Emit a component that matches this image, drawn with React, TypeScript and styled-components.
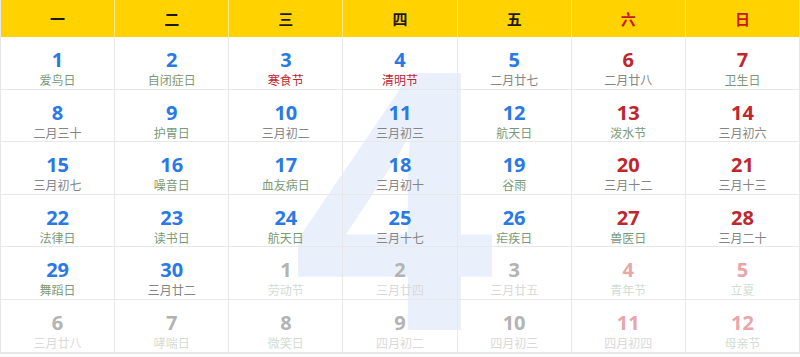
import React from "react";
import styled, { createGlobalStyle } from "styled-components";

type Tone = "work" | "rest";
type LabelKind = "lunar" | "fest" | "holiday";

interface Day {
  n: number;
  label: string;
  kind: LabelKind;
  other?: boolean;
}

const WEEK = ["一", "二", "三", "四", "五", "六", "日"];

const DAYS: Day[] = [
  { n: 1, label: "爱鸟日", kind: "fest" },
  { n: 2, label: "自闭症日", kind: "fest" },
  { n: 3, label: "寒食节", kind: "holiday" },
  { n: 4, label: "清明节", kind: "holiday" },
  { n: 5, label: "二月廿七", kind: "lunar" },
  { n: 6, label: "二月廿八", kind: "lunar" },
  { n: 7, label: "卫生日", kind: "fest" },
  { n: 8, label: "二月三十", kind: "lunar" },
  { n: 9, label: "护胃日", kind: "fest" },
  { n: 10, label: "三月初二", kind: "lunar" },
  { n: 11, label: "三月初三", kind: "lunar" },
  { n: 12, label: "航天日", kind: "fest" },
  { n: 13, label: "泼水节", kind: "fest" },
  { n: 14, label: "三月初六", kind: "lunar" },
  { n: 15, label: "三月初七", kind: "lunar" },
  { n: 16, label: "噪音日", kind: "fest" },
  { n: 17, label: "血友病日", kind: "fest" },
  { n: 18, label: "三月初十", kind: "lunar" },
  { n: 19, label: "谷雨", kind: "fest" },
  { n: 20, label: "三月十二", kind: "lunar" },
  { n: 21, label: "三月十三", kind: "lunar" },
  { n: 22, label: "法律日", kind: "fest" },
  { n: 23, label: "读书日", kind: "fest" },
  { n: 24, label: "航天日", kind: "fest" },
  { n: 25, label: "三月十七", kind: "lunar" },
  { n: 26, label: "疟疾日", kind: "fest" },
  { n: 27, label: "兽医日", kind: "fest" },
  { n: 28, label: "三月二十", kind: "lunar" },
  { n: 29, label: "舞蹈日", kind: "fest" },
  { n: 30, label: "三月廿二", kind: "lunar" },
  { n: 1, label: "劳动节", kind: "fest", other: true },
  { n: 2, label: "三月廿四", kind: "lunar", other: true },
  { n: 3, label: "三月廿五", kind: "lunar", other: true },
  { n: 4, label: "青年节", kind: "fest", other: true },
  { n: 5, label: "立夏", kind: "fest", other: true },
  { n: 6, label: "三月廿八", kind: "lunar", other: true },
  { n: 7, label: "哮喘日", kind: "fest", other: true },
  { n: 8, label: "微笑日", kind: "fest", other: true },
  { n: 9, label: "四月初二", kind: "lunar", other: true },
  { n: 10, label: "四月初三", kind: "lunar", other: true },
  { n: 11, label: "四月初四", kind: "lunar", other: true },
  { n: 12, label: "母亲节", kind: "fest", other: true },
];

const GlobalStyle = createGlobalStyle`
  html, body {
    margin: 0;
    padding: 0;
    background: #fff;
  }
  body {
    font-family: "Noto Sans CJK SC", "Noto Sans", sans-serif;
  }
`;

const Calendar = styled.div`
  position: relative;
  width: 800px;
  height: 357px;
  overflow: hidden;
`;

// big pale month number behind the grid
const Watermark = styled.span`
  position: absolute;
  left: 292px;
  top: 46px;
  font-family: "Open Sans", sans-serif;
  font-weight: 700;
  font-size: 360px;
  line-height: 0.8;
  color: #e9f0fc;
  user-select: none;
  z-index: 0;
`;

const Grid = styled.div`
  position: relative;
  z-index: 1;
  display: grid;
  grid-template-columns: repeat(7, 1fr);
  grid-template-rows: 37px repeat(6, 52.6px);
  width: 800px;
  box-sizing: border-box;
  border-left: 1px solid #e8e8e8;
  border-bottom: 1px solid #e8e8e8;
`;

const HeadCell = styled.div<{ $tone: Tone }>`
  display: flex;
  align-items: center;
  justify-content: center;
  background: #ffd200;
  border-right: 1px solid #fde88c;
  font-size: 15px;
  font-weight: 700;
  color: ${({ $tone }) => ($tone === "rest" ? "#c8161d" : "#1a1a1a")};
`;

const DayCell = styled.div`
  display: flex;
  flex-direction: column;
  align-items: center;
  padding-top: 11px;
  box-sizing: border-box;
  border-right: 1px solid #e8e8e8;
  border-bottom: 1px solid #e8e8e8;
`;

const numColor = (tone: Tone, other?: boolean) => {
  if (other) return tone === "rest" ? "#e9a6a8" : "#b3b3b3";
  return tone === "rest" ? "#c0262c" : "#2a79e6";
};

const DayNum = styled.div<{ $tone: Tone; $other?: boolean }>`
  font-family: "Open Sans", sans-serif;
  font-weight: 700;
  font-size: 20px;
  line-height: 23px;
  color: ${({ $tone, $other }) => numColor($tone, $other)};
`;

const labelColor: Record<LabelKind, [string, string]> = {
  lunar: ["#858585", "#d9d9d9"],
  fest: ["#789a78", "#d2ddd2"],
  holiday: ["#c0262c", "#ecbcbd"],
};

const DayLabel = styled.div<{ $kind: LabelKind; $other?: boolean }>`
  font-size: 12px;
  line-height: 16px;
  margin-top: 1px;
  color: ${({ $kind, $other }) => labelColor[$kind][$other ? 1 : 0]};
`;

export default function App() {
  return (
    <>
      <GlobalStyle />
      <Calendar>
        <Watermark>4</Watermark>
        <Grid>
          {WEEK.map((w, i) => (
            <HeadCell key={w} $tone={i >= 5 ? "rest" : "work"}>
              {w}
            </HeadCell>
          ))}
          {DAYS.map((d, i) => {
            const tone: Tone = i % 7 >= 5 ? "rest" : "work";
            return (
              <DayCell key={i}>
                <DayNum $tone={tone} $other={d.other}>
                  {d.n}
                </DayNum>
                <DayLabel $kind={d.kind} $other={d.other}>
                  {d.label}
                </DayLabel>
              </DayCell>
            );
          })}
        </Grid>
      </Calendar>
    </>
  );
}
